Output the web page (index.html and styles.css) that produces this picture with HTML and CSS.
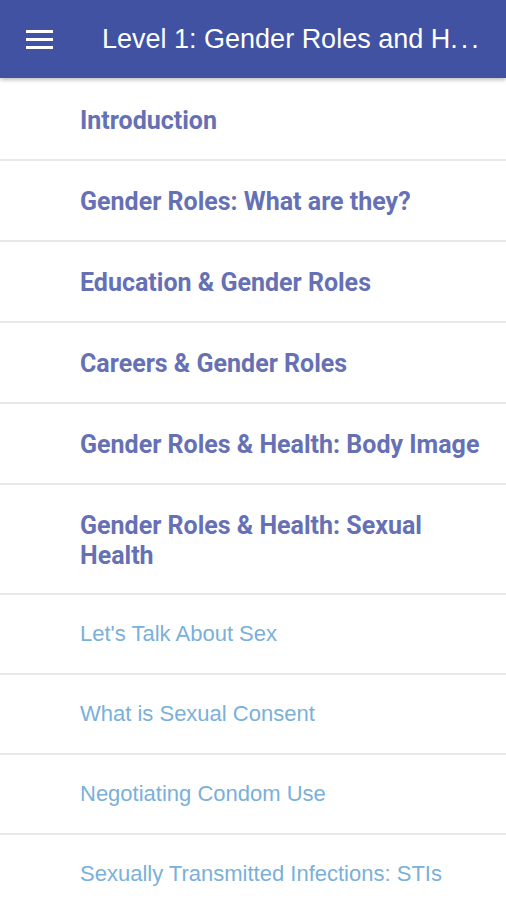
FILE: index.html
```html
<!DOCTYPE html>
<html>
<head>
<meta charset="utf-8">
<link rel="stylesheet" href="styles.css">
</head>
<body>
<header class="appbar">
  <button class="menu" aria-label="Menu">
    <svg width="27" height="20" viewBox="0 0 27 20"><rect x="0" y="1" width="27" height="3" fill="#fff"/><rect x="0" y="9" width="27" height="3" fill="#fff"/><rect x="0" y="17" width="27" height="3" fill="#fff"/></svg>
  </button>
  <h1 class="title">Level 1: Gender Roles and H<span class="dots">...</span></h1>
</header>
<ul class="list">
  <li class="item main">Introduction</li>
  <li class="item main">Gender Roles: What are they?</li>
  <li class="item main">Education &amp; Gender Roles</li>
  <li class="item main">Careers &amp; Gender Roles</li>
  <li class="item main">Gender Roles &amp; Health: Body Image</li>
  <li class="item main tall">Gender Roles &amp; Health: Sexual Health</li>
  <li class="item sub">Let's Talk About Sex</li>
  <li class="item sub">What is Sexual Consent</li>
  <li class="item sub">Negotiating Condom Use</li>
  <li class="item sub">Sexually Transmitted Infections: STIs</li>
</ul>
</body>
</html>
```
FILE: styles.css
```css
html, body {
  margin: 0;
  padding: 0;
  background: #fff;
  overflow: hidden;
}
.appbar {
  height: 78px;
  background: #4152a3;
  display: flex;
  align-items: center;
  box-shadow: 0 2px 4px rgba(0,0,0,0.25);
  position: relative;
  z-index: 1;
}
.menu {
  background: none;
  border: 0;
  padding: 0;
  margin: 0 0 0 26px;
  width: 27px;
  height: 20px;
  display: flex;
}
.title {
  margin: 0 0 0 49px;
  color: #fff;
  font-family: "Liberation Sans", Arial, sans-serif;
  font-weight: normal;
  font-size: 27px;
  white-space: nowrap;
  flex: 1;
  min-width: 0;
}
.dots {
  letter-spacing: 3px;
}
.list {
  list-style: none;
  margin: 0;
  padding: 2px 0 0;
}
.item {
  border-bottom: 2px solid #e8e8e8;
  padding: 3px 20px 0 80px;
  display: flex;
  align-items: center;
  box-sizing: border-box;
}
.main {
  height: 81px;
  font-family: Roboto, sans-serif;
  font-weight: 700;
  font-size: 25px;
  color: #6570b5;
  line-height: 30px;
}
.main.tall {
  height: 110px;
}
.sub {
  height: 80px;
  padding-top: 0;
  font-family: "Liberation Sans", Arial, sans-serif;
  font-size: 22px;
  color: #7ab0d9;
}
```
